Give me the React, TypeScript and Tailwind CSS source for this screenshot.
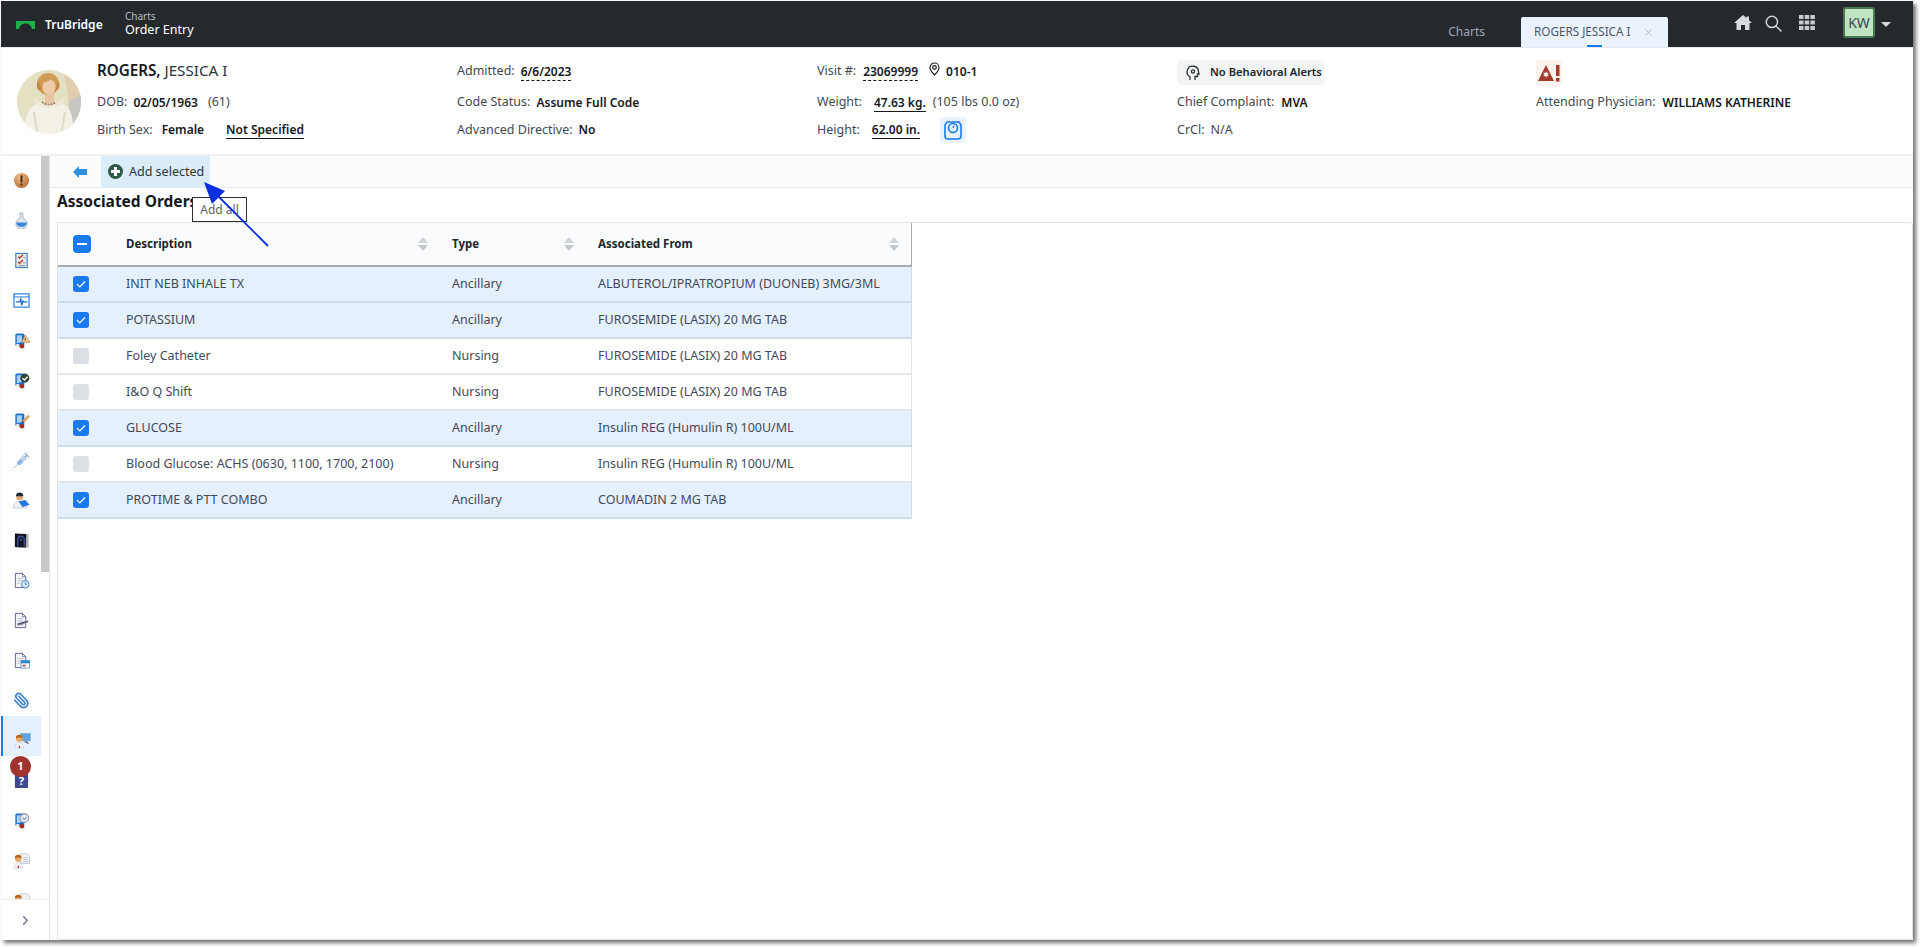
import { X, ChevronRight, Paperclip } from "lucide-react";

const rows = [
  { description: "INIT NEB INHALE TX", type: "Ancillary", from: "ALBUTEROL/IPRATROPIUM (DUONEB) 3MG/3ML", checked: true },
  { description: "POTASSIUM", type: "Ancillary", from: "FUROSEMIDE (LASIX) 20 MG TAB", checked: true },
  { description: "Foley Catheter", type: "Nursing", from: "FUROSEMIDE (LASIX) 20 MG TAB", checked: false },
  { description: "I&O Q Shift", type: "Nursing", from: "FUROSEMIDE (LASIX) 20 MG TAB", checked: false },
  { description: "GLUCOSE", type: "Ancillary", from: "Insulin REG (Humulin R) 100U/ML", checked: true },
  { description: "Blood Glucose: ACHS (0630, 1100, 1700, 2100)", type: "Nursing", from: "Insulin REG (Humulin R) 100U/ML", checked: false },
  { description: "PROTIME & PTT COMBO", type: "Ancillary", from: "COUMADIN 2 MG TAB", checked: true },
];

function Book({ children }: { children?: React.ReactNode }) {
  return (
    <svg width="17" height="17" viewBox="0 0 18 18">
      <rect x="2.500" y="1.500" width="9.500" height="14" rx="2" fill="#1a6ed2" />
      <path d="M4 3.500h5.500v7L4 12z" fill="#a9d2f6" />
      <circle cx="5" cy="14.500" r="2" fill="#e6edf5" />
      <circle cx="9.500" cy="15" r="2.500" fill="#a93226" />
      {children}
    </svg>
  );
}

function Doctor({ children }: { children?: React.ReactNode }) {
  return (
    <svg width="17" height="17" viewBox="0 0 18 18">
      {children}
      <path d="M1 17c0-4 2-6 4.500-6s4.500 2 4.500 6z" fill="#f2f5f9" stroke="#b8c4d0" strokeWidth="0.5" />
      <circle cx="5.500" cy="7" r="3.500" fill="#e8a860" />
      <path d="M2 6.500a3.500 3.500 0 0 1 7 0c-2-1-5-1-7 0z" fill="#b5651d" />
      <rect x="5" y="14.500" width="1.500" height="2.500" fill="#b23a2a" />
    </svg>
  );
}

function Doc({ children }: { children?: React.ReactNode }) {
  return (
    <svg width="17" height="17" viewBox="0 0 18 18">
      <path d="M2.500 1.500h7.500l3.500 3.500v11.500h-11z" fill="#f6f7fb" stroke="#5d5f95" strokeWidth="1" />
      <path d="M10 1.500V5h3.500" fill="none" stroke="#5d5f95" strokeWidth="0.8" />
      <path d="M4.500 7h6M4.500 9.500h6M4.500 12h3" stroke="#a8abc6" strokeWidth="0.8" />
      {children}
    </svg>
  );
}

const sidebarIcons = [
  <svg key="alert" width="17" height="17" viewBox="0 0 18 18">
    <defs>
      <radialGradient id="alert-fill" cx="40%" cy="30%" r="75%">
        <stop offset="0%" stopColor="#f2c08c" />
        <stop offset="100%" stopColor="#b5682e" />
      </radialGradient>
    </defs>
    <circle cx="9" cy="9" r="8" fill="url(#alert-fill)" />
    <rect x="7.800" y="3.500" width="2.400" height="7.500" rx="1" fill="#4e3a2c" />
    <rect x="7.800" y="12" width="2.400" height="2.400" rx="1" fill="#4e3a2c" />
  </svg>,
  <svg key="flask" width="17" height="17" viewBox="0 0 18 18">
    <path d="M7.500 1h3v5.500a6 6 0 1 1-3 0z" fill="#dfe5ec" stroke="#8c9aac" strokeWidth="0.7" />
    <path d="M3.300 11h11.400a5.800 5.800 0 0 1-11.400 0z" fill="#3f83d8" />
  </svg>,
  <svg key="checklist" width="17" height="17" viewBox="0 0 18 18">
    <rect x="3" y="1.500" width="12" height="15" fill="#e9e8e2" stroke="#3f7fc8" strokeWidth="1.200" />
    <path d="M5.500 5l1.500 1.500L10.500 3M5.500 10.500l1.500 1.500 3.500-3.500" stroke="#b23a2a" strokeWidth="1.400" fill="none" />
    <path d="M11 6h2M11 11.500h2M6 14.500h7" stroke="#7b8794" strokeWidth="1" />
  </svg>,
  <svg key="monitor" width="17" height="17" viewBox="0 0 18 18">
    <rect x="1" y="2" width="16" height="14" fill="#fff" stroke="#1f78e0" strokeWidth="1.200" />
    <path d="M1 5.200h16" stroke="#1f78e0" strokeWidth="1" />
    <path d="M3 10.500h4l1.200-3 1 6.500 1.300-4.500 .8 1h4" stroke="#2470c4" strokeWidth="1.400" fill="none" />
  </svg>,
  <Book key="b1"><path d="M13 3l5 8h-9z" fill="#f0c98a" stroke="#a87a3c" strokeWidth="0.6" /><rect x="12.500" y="6" width="1" height="3" fill="#4e3a2c" /></Book>,
  <Book key="b2"><circle cx="12.500" cy="6.500" r="4.800" fill="#2f4a38" /><path d="M10 6.500l2 2 3.500-3.500" stroke="#fff" strokeWidth="1.300" fill="none" /></Book>,
  <Book key="b3"><path d="M10 9l6-6 2 2-6 6z" fill="#dba868" /><path d="M10 9l2 2-2.500.6z" fill="#8a5a2c" /></Book>,
  <svg key="syringe" width="17" height="17" viewBox="0 0 18 18">
    <path d="M1 17l4-4" stroke="#a8bace" strokeWidth="1" />
    <path d="M4 11l7.500-7.500 3 3L7 14z" fill="#c2daf3" stroke="#8ea8c4" strokeWidth="0.6" />
    <path d="M4.500 12l4-4 2 2-4 4z" fill="#7fb0e6" />
    <path d="M12.500 1l4.500 4.500M14.500 3.500l-2 2" stroke="#8ea8c4" strokeWidth="1.300" />
  </svg>,
  <svg key="doctorbook" width="17" height="17" viewBox="0 0 18 18">
    <path d="M0.500 17c0-5 3-7 6.500-7s7 2 8 7z" fill="#e8eef5" stroke="#9eaab8" strokeWidth="0.5" />
    <circle cx="7" cy="5.500" r="3.500" fill="#e2a878" />
    <path d="M3 4.500c0-3 2-4 4-4s4 1 4 4z" fill="#1f2f3c" />
    <path d="M6 10l7-1.500 4.500 5-7.500 2.500z" fill="#1f78e0" />
  </svg>,
  <svg key="scan" width="17" height="17" viewBox="0 0 18 18">
    <rect x="3.500" y="2.500" width="13" height="14" fill="#b0b0b0" />
    <path d="M2 1.500l12 .5-.5 14.500-11.500-.5z" fill="#14161f" />
    <path d="M5 15V8a3.500 3.500 0 0 1 7 0v7" fill="none" stroke="#3c4f9a" strokeWidth="1.400" />
    <circle cx="8.500" cy="8" r="1.600" fill="#2f3f80" />
  </svg>,
  <Doc key="d1"><circle cx="13" cy="13" r="4" fill="#d9e9f8" stroke="#2e78c0" strokeWidth="0.9" /><path d="M13 11v2h1.800" stroke="#2e5f90" strokeWidth="0.8" fill="none" /></Doc>,
  <Doc key="d2"><path d="M5 14.500l11.500-4-1-1.500-10.500 3z" fill="#5d6078" /><path d="M4 13.500h7" stroke="#8a8ca8" strokeWidth="1" /></Doc>,
  <Doc key="d3"><rect x="8.500" y="9" width="9" height="8" fill="#fff" stroke="#2e78c0" strokeWidth="0.7" /><rect x="8.500" y="9" width="9" height="3" fill="#2e8ad0" /><rect x="10" y="13.500" width="3.500" height="1.800" fill="#c9503a" /></Doc>,
  <Paperclip key="clip" className="w-[17px] h-[17px] text-[#3f82cc] -scale-x-100" strokeWidth={2.400} />,
  <Doctor key="p1"><rect x="7" y="1.500" width="10.500" height="8" fill="#5fa4e2" stroke="#8fa6bd" strokeWidth="0.5" /><path d="M10 10h4l2 3z" fill="#40505e" /></Doctor>,
  <svg key="help" width="17" height="17" viewBox="0 0 18 18">
    <rect x="2" y="1" width="14" height="16" rx="1" fill="#3f4b8f" />
    <text x="9" y="14" textAnchor="middle" fontSize="12" fontWeight="700" fill="#fff" fontFamily="Noto Sans, sans-serif">?</text>
  </svg>,
  <Book key="b4"><circle cx="12" cy="6.500" r="4.500" fill="#dfe6ee" stroke="#8d98a6" strokeWidth="1.200" /><path d="M10.500 6.500l1.500 1.500L14 5.500" stroke="#3e5a7a" strokeWidth="0.9" fill="none" /></Book>,
  <Doctor key="p2"><path d="M8 2h7l2.500 2.500V12H8z" fill="#eef1f5" stroke="#9aa6b4" strokeWidth="0.6" /><path d="M11 6h4.500M11 8h4.500M11 10h4.500" stroke="#aab2bd" strokeWidth="0.7" /></Doctor>,
  <Doctor key="p3"><path d="M8 2h7l2.500 2.500V12H8z" fill="#eef1f5" stroke="#9aa6b4" strokeWidth="0.6" /></Doctor>,
];

function Label({ children }: { children: React.ReactNode }) {
  return <span className="text-[12.500px] text-[#3f4854]">{children}</span>;
}

function Value({ children, className = "" }: { children: React.ReactNode; className?: string }) {
  return <span className={`text-[12px] font-semibold text-[#14181d] ${className}`}>{children}</span>;
}

function Checkbox({ checked }: { checked: boolean }) {
  if (!checked) return <div className="w-4 h-4 rounded-[3px] bg-[#dcdfe4]" />;
  return (
    <div className="w-4 h-4 rounded-[3px] bg-[#1a7af0] flex items-center justify-center">
      <svg width="10" height="8" viewBox="0 0 10 8">
        <path d="M1 4l2.800 2.800L9 1.500" fill="none" stroke="#fff" strokeWidth="1.200" />
      </svg>
    </div>
  );
}

function SortIcon() {
  return (
    <svg width="10" height="14" viewBox="0 0 10 14">
      <path d="M5 0l5 6H0z" fill="#cfd4da" />
      <path d="M5 14L0 8h10z" fill="#c3c9d1" />
    </svg>
  );
}

function Photo() {
  return (
    <svg width="64" height="64" viewBox="0 0 64 64">
      <defs>
        <clipPath id="photo-clip"><circle cx="32" cy="32" r="32" /></clipPath>
      </defs>
      <g clipPath="url(#photo-clip)">
        <rect width="64" height="64" fill="#e4e0c4" />
        <path d="M46 0h18v64H50c4-20 2-40-4-64z" fill="#e0cdaf" />
        <path d="M52 32l12-8v40H50z" fill="#c6c6c2" />
        <path d="M8 64c0-14 0-26 14-31 6-2 16-2 22 0 12 4 12 17 12 31z" fill="#f4f2e6" />
        <path d="M20 62l-3-20M45 60l3-18" stroke="#e0dbc8" strokeWidth="2" />
        <path d="M16 27l9 6h14l9-6-3 8-13 3-13-3z" fill="#ece9d8" />
        <rect x="28" y="24" width="9" height="9" fill="#e8c4a2" />
        <ellipse cx="31" cy="14" rx="11" ry="11" fill="#d19a55" />
        <path d="M21 20c-2-3-1-7 0-9l4 9zM41 20c2-3 2-7 0-9l-3 9z" fill="#c48a45" />
        <ellipse cx="32" cy="17" rx="6.500" ry="8" fill="#efcdaa" />
        <path d="M25 12c3 1 7-1 9-3 1 2 3 3 5 3 0-4-3-7-7-7-4 0-7 3-7 7z" fill="#d19a55" />
        <path d="M25 32q7 5 14 0" stroke="#a98468" strokeWidth="2" strokeDasharray="2 1" fill="none" />
      </g>
    </svg>
  );
}

function HeadAlert() {
  return (
    <svg width="14" height="16" viewBox="0 0 14 16" fill="none" stroke="#2a3038" strokeWidth="1.300">
      <path d="M4 15v-3.200A5.700 5.700 0 1 1 12.500 7l.5 2h-1.500v2.500H9V15" />
      <circle cx="7" cy="6.500" r="1.600" />
    </svg>
  );
}

export default function App() {
  return (
    <div
      className="w-[1923px] h-[948px] bg-white pt-px pl-px overflow-hidden text-[12.500px] text-[#3f4854]"
      style={{ fontFamily: '"Noto Sans", sans-serif' }}
    >
      <div className="relative w-[1912px] h-[939px] flex flex-col bg-white shadow-[3px_3px_4px_rgba(0,0,0,0.55)]">
        {/* Top bar */}
        <header className="h-[46px] shrink-0 bg-[#25292e] flex">
          <div className="flex items-center pl-[15px] w-[124px] pt-px">
            <svg width="19" height="8" viewBox="0 0 19 8">
              <path d="M0 0H19V8H16C15 4 12.500 2.500 9.500 2.500S4 4 3 8H0Z" fill="#1cb04a" />
            </svg>
            <span className="ml-[10px] text-[12px] font-semibold text-white">TruBridge</span>
          </div>
          <div className="flex flex-col pt-[10px] leading-none">
            <span className="text-[10px] text-[#b6bbc0]">Charts</span>
            <span className="mt-[3px] text-[12.500px] text-white">Order Entry</span>
          </div>
          <div className="ml-auto flex items-end">
            <span className="h-[30px] mr-[36px] flex items-center text-[#a0a4b0] text-[12px]">Charts</span>
            <div className="relative w-[147px] h-[30px] bg-[#eaf3fd] rounded-t-[2px] flex items-center pl-[13px] text-[#4a5568] text-[11.700px]">
              ROGERS JESSICA I
              <X className="absolute left-[122px] top-[10px] w-[11px] h-[11px] text-[#9aa3ad]" strokeWidth={1.500} />
              <div className="absolute left-[66px] bottom-0 w-[15px] h-[2px] bg-[#1a7af0]" />
            </div>
            <div className="self-start w-[245px] h-full flex items-start">
              <svg className="ml-[66px] mt-[14px]" width="18" height="15" viewBox="0 0 18 15">
                <path d="M9 0l3.500 3V1.500H15v3.700L18 8h-2.500v7H11v-5H7v5H2.500V8H0z" fill="#d8dbde" />
              </svg>
              <svg className="ml-[13px] mt-[14px]" width="17" height="17" viewBox="0 0 16 16" fill="none" stroke="#d0d3d6" strokeWidth="1.400">
                <circle cx="6.500" cy="6.500" r="5.300" />
                <path d="M10.500 10.500L15.500 15.500" />
              </svg>
              <svg className="ml-[17px] mt-[14px]" width="16" height="15" viewBox="0 0 16 15" fill="#c8cbd0">
                <rect width="4.500" height="4" /><rect x="5.700" width="4.500" height="4" /><rect x="11.400" width="4.500" height="4" />
                <rect y="5.500" width="4.500" height="4" /><rect x="5.700" y="5.500" width="4.500" height="4" /><rect x="11.400" y="5.500" width="4.500" height="4" />
                <rect y="11" width="4.500" height="4" /><rect x="5.700" y="11" width="4.500" height="4" /><rect x="11.400" y="11" width="4.500" height="4" />
              </svg>
              <div className="ml-[28px] mt-[6px] w-[32px] h-[31px] rounded-[3px] bg-[#bfe3c3] border-2 border-[#4c7a50] flex items-center justify-center text-[#3a4652] text-[14px]">
                KW
              </div>
              <svg className="ml-[6px] mt-[21px]" width="10" height="5" viewBox="0 0 10 5">
                <path d="M0 0h10L5 5z" fill="#d6d9dc" />
              </svg>
            </div>
          </div>
        </header>

        {/* Patient banner */}
        <section className="h-[109px] shrink-0 border-t border-[#e4ebf3] border-b-2 border-b-[#eef0f2] flex pt-[10px]">
          <div className="w-[96px] shrink-0 pl-[16px] pt-[12px]">
            <Photo />
          </div>
          <div className="grid grid-cols-[360px_360px_360px_360px_1fr] grid-rows-[25px_39px_16px] items-center">
            <div className="text-[15.200px] text-[#14181d]">
              <span className="font-semibold">ROGERS,</span> <span className="text-[#2c333b]">JESSICA I</span>
            </div>
            <div className="mt-[2px] flex items-center">
              <Label>Admitted:</Label>
              <Value className="ml-[6px] border-b border-dashed border-[#14181d] leading-[17px]">6/6/2023</Value>
            </div>
            <div className="mt-[2px] flex items-center">
              <Label>Visit #:</Label>
              <Value className="ml-[7px] border-b border-dashed border-[#14181d] leading-[17px]">23069999</Value>
              <svg className="ml-[11px] -mt-[6px]" width="11" height="14" viewBox="0 0 11 14" fill="none" stroke="#1b2026" strokeWidth="1.200">
                <path d="M5.500 13C2.500 10 1 8 1 5.500a4.500 4.500 0 0 1 9 0C10 8 8.500 10 5.500 13z" />
                <circle cx="5.500" cy="5.500" r="1.800" />
              </svg>
              <Value className="ml-[6px]">010-1</Value>
            </div>
            <div className="flex">
              <div className="mt-[4px] flex items-center h-[25px] w-[147px] whitespace-nowrap rounded-[4px] bg-[#f2f4f6] pl-[9px] text-[11.200px] font-semibold text-[#20262c]">
                <HeadAlert />
                <span className="ml-[10px]">No Behavioral Alerts</span>
              </div>
            </div>
            <div>
              <div className="mt-[4px] -ml-px w-[26px] h-[26px] rounded-[3px] bg-[#fbf2ee] flex items-center justify-center">
                <svg width="22" height="18" viewBox="0 0 22 18">
                  <path d="M8 1l8 16H0z" fill="#a33a2c" />
                  <path d="M8 7l.8 2 2-.2-1.200 1.700 1.200 1.700-2-.2L8 14l-.8-2-2 .2 1.200-1.700-1.200-1.700 2 .2z" fill="#fbf2ee" />
                  <rect x="18" y="1" width="3.500" height="11" fill="#a33a2c" />
                  <rect x="18" y="14" width="3.500" height="3.500" fill="#a33a2c" />
                </svg>
              </div>
            </div>

            <div className="flex items-center">
              <Label>DOB:</Label>
              <Value className="ml-[6px]">02/05/1963</Value>
              <span className="ml-[10px]">(61)</span>
            </div>
            <div className="flex items-center">
              <Label>Code Status:</Label>
              <Value className="ml-[6px]">Assume Full Code</Value>
            </div>
            <div className="flex items-center">
              <Label>Weight:</Label>
              <Value className="ml-[12px] border-b border-[#14181d] leading-[17px]">47.63 kg.</Value>
              <span className="ml-[7px]">(105 lbs 0.0 oz)</span>
            </div>
            <div className="flex items-center">
              <Label>Chief Complaint:</Label>
              <Value className="ml-[7px]">MVA</Value>
            </div>
            <div className="flex items-center -ml-px">
              <Label>Attending Physician:</Label>
              <Value className="ml-[7px]">WILLIAMS KATHERINE</Value>
            </div>

            <div className="flex items-center">
              <Label>Birth Sex:</Label>
              <Value className="ml-[9px]">Female</Value>
              <Value className="ml-[22px] border-b border-[#14181d] leading-[17px]">Not Specified</Value>
            </div>
            <div className="flex items-center">
              <Label>Advanced Directive:</Label>
              <Value className="ml-[6px]">No</Value>
            </div>
            <div className="flex items-center">
              <Label>Height:</Label>
              <Value className="ml-[12px] border-b border-[#14181d] leading-[17px]">62.00 in.</Value>
              <div className="ml-[20px] w-[26px] h-[26px] shrink-0 rounded-[3px] bg-[#eaf3fd] flex items-center justify-center">
                <svg width="18" height="20" viewBox="0 0 18 20" fill="none" stroke="#1a7af0" strokeWidth="1.600">
                  <path d="M3 2h12l2 3v11a3 3 0 0 1-3 3H4a3 3 0 0 1-3-3V5z" />
                  <circle cx="9" cy="8" r="4.500" />
                  <path d="M9 8l1-2.500" strokeWidth="1.200" />
                </svg>
              </div>
            </div>
            <div className="flex items-center">
              <Label>CrCl:</Label>
              <span className="ml-[6px]">N/A</span>
            </div>
            <div />
          </div>
        </section>

        <div className="flex flex-1 min-h-0">
          {/* Left rail */}
          <aside className="w-[49px] shrink-0 flex flex-col border-r border-[#dfe2e6]">
            <div className="flex flex-1 min-h-0">
              <nav className="w-[40px] shrink-0 overflow-hidden">
                {sidebarIcons.map((icon, i) => (
                  <div
                    key={i}
                    className={`h-[40px] flex justify-center pt-[16px] ${i === 14 ? "bg-[#e5f0fd] border-l-2 border-[#1a7af0]" : ""}`}
                  >
                    {icon}
                  </div>
                ))}
              </nav>
              <div className="w-[8px] h-[416px] bg-[#c8c8c8]" />
            </div>
            <div className="h-[41px] shrink-0 border-t border-[#eceef0] flex items-center justify-center">
              <ChevronRight className="w-[15px] h-[15px] text-[#6e6f8c]" strokeWidth={2} />
            </div>
          </aside>

          {/* Main */}
          <main className="flex-1 min-w-0 flex flex-col">
            <div className="h-[32px] shrink-0 bg-[#fafbfb] border-b border-[#e8eaec] flex">
              <div className="w-[51px] flex items-center justify-end pr-[14px]">
                <svg width="14" height="12" viewBox="0 0 14 12">
                  <path d="M0 6l6-6v3h8v6H6v3z" fill="#2f8fe0" />
                </svg>
              </div>
              <div className="w-[109px] bg-[#dcedfa] flex items-center pl-[7px]">
                <svg width="15" height="15" viewBox="0 0 15 15">
                  <circle cx="7.500" cy="7.500" r="7.500" fill="#2f5a46" />
                  <path d="M6 3h3v3h3v3H9v3H6V9H3V6h3z" fill="#fff" />
                </svg>
                <span className="ml-[6px] pt-px text-[#2c343d] text-[12.500px]">Add selected</span>
              </div>
            </div>
            <div className="h-[34px] shrink-0 flex items-center pl-[7px] pb-[6px] text-[15.500px] font-bold text-[#14181d]">
              Associated Orders
            </div>
            <div className="flex-1 min-h-0 ml-[7px] border border-[#dfe2e6] rounded-tr-[3px] rounded-b-[3px]">
              <div className="w-[854px]">
                <div className="h-[44px] bg-[#fafbfd] border-b-2 border-b-[#a9abae] border-r border-r-[#a9abae] grid grid-cols-[68px_326px_146px_1fr] items-center font-bold text-[11.500px] text-[#20262c]">
                  <div className="pl-[15px]">
                    <div className="w-[18px] h-[18px] rounded-[4px] bg-[#1a7af0] flex items-center justify-center">
                      <div className="w-[10px] h-[2px] bg-white" />
                    </div>
                  </div>
                  <div className="flex items-center justify-between pr-[24px]">Description<SortIcon /></div>
                  <div className="flex items-center justify-between pr-[24px]">Type<SortIcon /></div>
                  <div className="flex items-center justify-between pr-[12px]">Associated From<SortIcon /></div>
                </div>
                {rows.map((row) => (
                  <div
                    key={row.description}
                    className={`h-[36px] grid grid-cols-[68px_326px_146px_1fr] items-center border-b-2 border-r text-[#3f4a5a] ${row.checked ? "bg-[#e5f0fd] border-[#cfdcec]" : "bg-white border-[#e4e6ea]"}`}
                  >
                    <div className="pl-[15px]"><Checkbox checked={row.checked} /></div>
                    <div className="pt-px">{row.description}</div>
                    <div className="pt-px">{row.type}</div>
                    <div className="pt-px">{row.from}</div>
                  </div>
                ))}
              </div>
            </div>
          </main>
        </div>

        {/* Overlays: badge, tooltip, annotation arrow */}
        <div className="absolute left-[9px] top-[755px] w-[21px] h-[21px] rounded-full bg-[#a0332e] flex items-center justify-center text-white text-[11px] font-bold">
          1
        </div>
        <div className="absolute left-[191px] top-[196px] w-[55px] h-[25px] bg-white border border-[#2c3036] flex items-center justify-center text-[12px] text-[#5a6470]">
          Add all
        </div>
        <svg className="absolute left-[190px] top-[170px]" width="90" height="85" viewBox="0 0 90 85">
          <path d="M77 75L20 18" stroke="#0a2fe0" strokeWidth="1.800" />
          <path d="M13 11l21 9-13 13z" fill="#0a2fe0" />
        </svg>
      </div>
    </div>
  );
}
